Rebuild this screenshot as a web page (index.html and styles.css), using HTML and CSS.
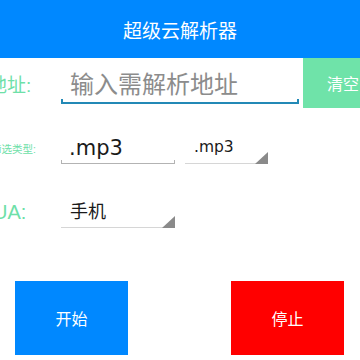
FILE: index.html
```html
<!DOCTYPE html>
<html lang="zh-CN">
<head>
<meta charset="utf-8">
<title>超级云解析器</title>
<link rel="stylesheet" href="styles.css">
</head>
<body>
<div class="app">
  <header class="topbar">超级云解析器</header>

  <div class="row row-url">
    <div class="label label-url"><span>地址:</span></div>
    <div class="edit edit-url"><span class="placeholder">输入需解析地址</span></div>
    <div class="btn-clear">清空</div>
  </div>

  <div class="row row-type">
    <div class="label label-type"><span>筛选类型:</span></div>
    <div class="edit edit-type"><span class="latin big">.mp3</span></div>
    <div class="spinner spinner-type"><span class="latin small">.mp3</span></div>
  </div>

  <div class="row row-ua">
    <div class="label label-ua"><span>UA:</span></div>
    <div class="spinner spinner-ua"><span>手机</span></div>
  </div>

  <div class="actions">
    <div class="btn btn-start">开始</div>
    <div class="btn btn-stop">停止</div>
  </div>
</div>
</body>
</html>
```

FILE: styles.css
```css
html, body {
  margin: 0;
  padding: 0;
  background: #ffffff;
}

body {
  width: 360px;
  height: 360px;
  overflow: hidden;
  font-family: "Liberation Sans", "Noto Sans CJK SC", sans-serif;
}

.app {
  width: 360px;
  overflow: hidden;
}

.topbar {
  height: 58px;
  background: #0088ff;
  color: #ffffff;
  font-family: "Noto Sans CJK SC", sans-serif;
  font-size: 19px;
  display: flex;
  align-items: center;
  justify-content: center;
}

.row {
  display: flex;
  align-items: center;
}

.label {
  flex: none;
  width: 61px;
  white-space: nowrap;
  color: #6ee0a8;
  font-family: "Liberation Sans", "Noto Sans CJK SC", sans-serif;
}

.label-url span {
  display: inline-block;
  margin-left: -12px;
  font-size: 19px;
}

.label-type span {
  display: inline-block;
  margin-left: -9px;
  font-size: 10.5px;
}

.label-ua span {
  display: inline-block;
  margin-left: -7px;
  font-size: 20px;
}

/* Row 1 */
.row-url {
  height: 50px;
  width: 460px;
}

.edit {
  flex: none;
  position: relative;
  box-sizing: border-box;
  display: flex;
  align-items: center;
  padding-left: 9px;
}

.edit::after {
  content: "";
  position: absolute;
  left: 0;
  right: 0;
  bottom: 0;
  height: 4px;
  box-sizing: border-box;
  border: 1px solid #b3b3b3;
  border-top: none;
}

.edit-url {
  width: 238px;
  height: 46px;
  align-self: flex-start;
  margin-top: 0;
  padding-top: 2px;
}

.edit-url::after {
  height: 5px;
  border-color: #2389b6;
  border-width: 0 2px 2px 2px;
}

.placeholder {
  font-family: "Noto Sans CJK SC", sans-serif;
  font-size: 24px;
  color: #8c8c8c;
}

.btn-clear {
  flex: none;
  width: 80px;
  height: 50px;
  margin-left: 4px;
  background: #6fe3a9;
  color: #ffffff;
  font-family: "Noto Sans CJK SC", sans-serif;
  font-size: 16px;
  display: flex;
  align-items: center;
  justify-content: center;
}

/* Row 2 */
.row-type {
  padding-top: 24px;
  gap: 10px;
}

.row-type .label {
  margin-right: -10px;
}

.edit-type {
  width: 114px;
  height: 32px;
  padding-left: 8px;
}

.latin {
  font-family: "DejaVu Sans", sans-serif;
  color: #1a1a1a;
}

.big {
  font-size: 21px;
}

.small {
  font-size: 15.5px;
}

.spinner {
  flex: none;
  position: relative;
  box-sizing: border-box;
  height: 32px;
  border-bottom: 1px solid #d6d6d6;
  display: flex;
  align-items: center;
  padding-left: 9px;
  padding-bottom: 2px;
}

.spinner::after {
  content: "";
  position: absolute;
  right: 0;
  bottom: -1px;
  width: 13px;
  height: 12px;
  background: #8a8a8a;
  clip-path: polygon(100% 0, 100% 100%, 0 100%);
}

.spinner-type {
  width: 83px;
}

/* Row 3 */
.row-ua {
  margin-top: 32px;
}

.spinner-ua {
  width: 114px;
  font-family: "Noto Sans CJK SC", sans-serif;
  font-size: 18px;
  color: #1a1a1a;
  padding-bottom: 4px;
}

/* Actions */
.actions {
  margin-top: 53px;
  display: flex;
  justify-content: space-between;
  padding: 0 16px 0 15px;
}

.btn {
  width: 113px;
  height: 74px;
  color: #ffffff;
  font-family: "Noto Sans CJK SC", sans-serif;
  font-size: 16px;
  display: flex;
  align-items: center;
  justify-content: center;
}

.btn-start {
  background: #0088ff;
}

.btn-stop {
  background: #ff0000;
}
```
